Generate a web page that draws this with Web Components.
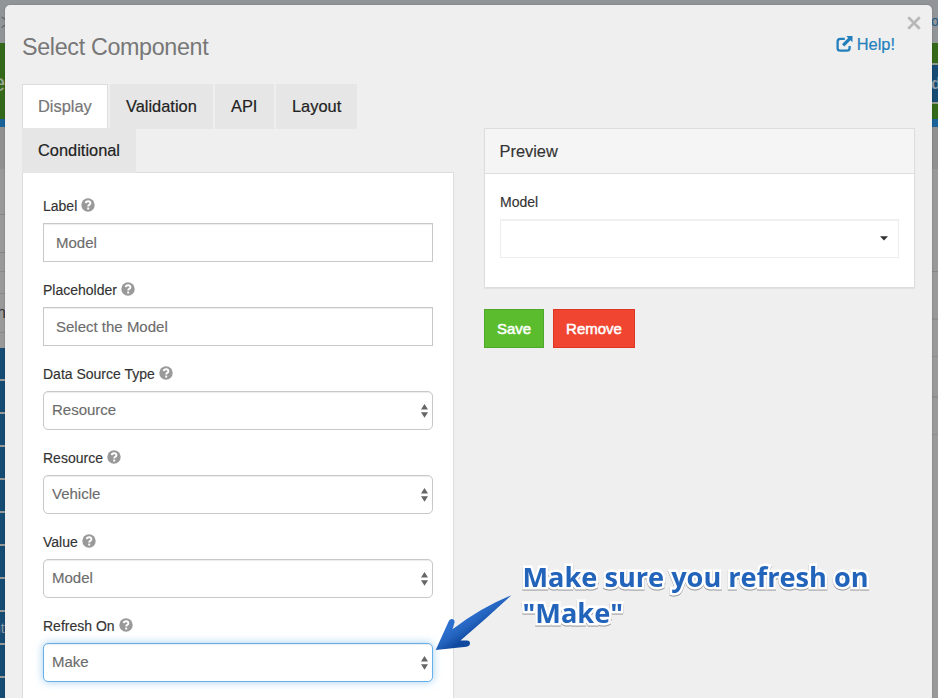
<!DOCTYPE html>
<html lang="en">
<head>
<meta charset="utf-8">
<title>Select Component</title>
<style>
html,body{margin:0;height:100%;overflow:hidden}
body{font-family:"Liberation Sans",Arial,sans-serif;color:#333;background:#999;position:relative}
</style>
</head>
<body>
<page-backdrop></page-backdrop>
<modal-dialog>
  <dialog-header slot="header" heading="Select Component"></dialog-header>
  <div slot="left">
    <tab-list>
      <tab-item active style="width:86px">Display</tab-item><tab-item style="width:103px">Validation</tab-item><tab-item style="width:59px">API</tab-item><tab-item style="width:81px">Layout</tab-item><tab-item style="width:114px">Conditional</tab-item>
    </tab-list>
    <form-panel>
      <form-field label="Label" value="Model"></form-field>
      <form-field label="Placeholder" value="Select the Model"></form-field>
      <form-field label="Data Source Type" value="Resource" type="select"></form-field>
      <form-field label="Resource" value="Vehicle" type="select"></form-field>
      <form-field label="Value" value="Model" type="select"></form-field>
      <form-field label="Refresh On" value="Make" type="select" focused></form-field>
    </form-panel>
  </div>
  <preview-panel slot="right" heading="Preview" label="Model"></preview-panel>
  <action-button slot="actions">Save</action-button>
  <action-button slot="actions" danger>Remove</action-button>
</modal-dialog>
<callout-note></callout-note>
<script>
const define = (name, render) => customElements.define(name, class extends HTMLElement {
  connectedCallback() {
    if (this.shadowRoot) return;
    this.attachShadow({mode: 'open'}).innerHTML = render(this);
  }
});

const seg = (h, c, text = '', style = '') => `<div style="height:${h}px;background:${c}">${text ? `<span style="${style}">${text}</span>` : ''}</div>`;
const line = (c = '#868686') => seg(1, c);

define('page-backdrop', () => {
  const g = '#999';
  let left = seg(43, '#919598', '<svg width="5" height="43" viewBox="0 0 5 43"><path d="M1.5 17l4 2.5M1.5 27.500l4-2.500" stroke="#62686c" stroke-width="1.300" fill="none"/></svg>', '')
    + seg(76, '#34691a', 'e', 'font-size:24px;line-height:79px;color:#9aa692;margin-left:-8px') + seg(8, '#1b6299') + seg(42, '#909090')
    + seg(45, g) + line() + seg(37, g) + line() + seg(18, g) + line('#8a8a8a') + seg(21, g) + line('#8a8a8a')
    + seg(38, g, 'n', 'font-size:16px;line-height:38px;color:#333;margin-left:-3px') + line('#8a8a8a') + seg(15, g);
  for (let i = 0; i < 11; i++) left += seg(31, '#164b74', i === 8 ? 'nt' : '', 'font-size:14px;line-height:32px;color:#8c9ba7;margin-left:-7px') + seg(2, '#999');
  const right = seg(43, '#919598', 'oc', 'font-size:14px;line-height:42px;color:#245e85;margin-left:-1px')
    + seg(20, '#34691a') + seg(2, '#919b8b') + seg(37, '#164b74', 'd', 'font-size:16px;font-weight:bold;line-height:38px;color:#8f9ca6;margin-left:-1px')
    + seg(2, '#919b8b') + seg(15, '#34691a') + seg(8, '#1b6299') + seg(42, '#909090') + seg(102, g) + line()
    + seg(46, g) + seg(2, '#8e8e8e') + seg(36, g) + line('#8d8d8d') + seg(39, g) + seg(2, '#8e8e8e') + seg(36, g) + line('#8e8e8e') + seg(263, g);
  return `<style>
    :host{position:absolute;inset:0;display:flex;justify-content:space-between;background:#919598;overflow:hidden}
    .l{width:5px}.r{width:6px}.l,.r{overflow:hidden;height:698px}
    .l>div,.r>div{overflow:hidden;white-space:nowrap}
    span{display:block}svg{display:block}
  </style><div class="l">${left}</div><div class="r">${right}</div>`;
});

define('modal-dialog', () => `<style>
  :host{position:absolute;left:5px;right:6px;top:5px;bottom:0;overflow:hidden;box-sizing:border-box;background:#efefef;border-radius:5px 5px 0 0;box-shadow:0 0 2px rgba(0,0,0,.25);padding:0 17px;display:block}
  .cols{display:grid;grid-template-columns:432px 431px;column-gap:30px}
  .right{padding-top:44px}
  .actions{display:flex;gap:9px;margin-top:21px}
</style>
<slot name="header"></slot>
<div class="cols"><slot name="left"></slot><div class="right"><slot name="right"></slot><div class="actions"><slot name="actions"></slot></div></div></div>`);

define('dialog-header', el => `<style>
  :host{display:flex;height:79px;justify-content:space-between}
  h1{margin:28px 0 0;font-weight:400;font-size:23.300px;letter-spacing:-.33px;line-height:28px;color:#777}
  .side{display:flex;flex-direction:column;align-items:flex-end;margin-right:-6px}
  .x{width:14px;height:14px;margin-top:11px}
  a{display:flex;align-items:center;gap:4px;color:#2380bd;font-size:16.400px;line-height:20px;margin:4px 26px 0 0;-webkit-text-stroke:.2px #2380bd}
  svg{display:block}
</style>
<h1>${el.getAttribute('heading')}</h1>
<div class="side">
  <svg class="x" viewBox="0 0 14 14"><path d="M1.300 1.300l11.400 11.400M12.700 1.300L1.300 12.700" stroke="#b8b8b8" stroke-width="2.700"/></svg>
  <a><svg width="17" height="17" viewBox="0 0 17 17"><path d="M8.800 2.900H4.300Q1.600 2.900 1.600 5.600V12Q1.600 14.700 4.300 14.700H10.900Q13.600 14.700 13.600 12V10" fill="none" stroke="currentColor" stroke-width="2.300"/><path d="M10.300 0H16.500V6.200L14.500 4.300L8.300 10.500L6 8.200L12.200 2Z" fill="currentColor"/></svg>Help!</a>
</div>`);

define('tab-list', () => `<style>:host{display:flex;flex-wrap:wrap;column-gap:2px;height:88px;align-content:flex-start}</style><slot></slot>`);

define('tab-item', () => `<style>
  :host{display:block;box-sizing:border-box;height:45px;margin-bottom:-1px;padding-left:16px;line-height:45px;font-size:16.400px;color:#222;background:#e6e6e6;white-space:nowrap;-webkit-text-stroke:.2px}
  :host([active]){height:44px;padding-left:15px;line-height:43px;color:#777;background:#fff;border:1px solid #ddd;border-bottom:0}
</style><slot></slot>`);

define('form-panel', () => `<style>
  :host{display:block;box-sizing:border-box;width:432px;height:526px;background:#fff;border:1px solid #ddd;border-bottom:0;padding:23px 20px 0}
</style><slot></slot>`);

const help = `<svg width="14" height="14" viewBox="0 0 14 14"><circle cx="7" cy="7" r="6.700" fill="#999"/><path d="M4.700 5.200Q4.900 3.200 7.100 3.200Q9.400 3.200 9.400 5.200Q9.400 6.300 8.200 6.900Q7.200 7.400 7.200 8.600" fill="none" stroke="#fff" stroke-width="1.900"/><path d="M6.200 9.600h2v1.900h-2z" fill="#fff"/></svg>`;

define('form-field', el => {
  const select = el.getAttribute('type') === 'select';
  return `<style>
  :host{display:block;height:84px}
  .label{display:flex;gap:4px;height:27px;font-size:14px;line-height:21px;color:#333;-webkit-text-stroke:.15px}
  .label svg{margin-top:2px}
  .box{display:flex;justify-content:space-between;align-items:center;box-sizing:border-box;height:39px;border:1px solid #c8c8c8;background:#fff;padding:0 4px 1px 12px;font-size:15px;color:#6c6c6c;box-shadow:inset 0 1px 1px rgba(0,0,0,.075);-webkit-text-stroke:.15px}
  .select{border-radius:5px;padding:0 4px 2px 8px}
  .select svg{margin-top:2px}
  :host([focused]) .box{border-color:#66afe9;box-shadow:inset 0 1px 1px rgba(0,0,0,.075),0 0 8px rgba(102,175,233,.6)}
  </style>
  <div class="label"><span>${el.getAttribute('label')}</span>${help}</div>
  <div class="box ${select ? 'select' : ''}"><span>${el.getAttribute('value')}</span>${select ? '<svg width="7" height="14" viewBox="0 0 7 14"><path d="M0 5.500L3.500 0L7 5.500zM0 8.200h7L3.500 13.700z" fill="#666"/></svg>' : ''}</div>`;
});

define('preview-panel', el => `<style>
  :host{display:block;box-sizing:border-box;height:160px;background:#fff;border:1px solid #ddd;box-shadow:0 1px 1px rgba(0,0,0,.05)}
  .head{height:44px;line-height:45px;padding-left:14.500px;font-size:16.400px;color:#333;background:#f5f5f5;border-bottom:1px solid #ddd;-webkit-text-stroke:.15px}
  .body{padding:18px 15px 0}
  .label{font-size:14px;line-height:21px;height:27px;-webkit-text-stroke:.15px}
  .box{display:flex;align-items:center;justify-content:flex-end;box-sizing:border-box;height:39px;border:1px solid #eee;box-shadow:inset 0 1px 1px rgba(0,0,0,.06);padding-right:10px}
</style>
<div class="head">${el.getAttribute('heading')}</div>
<div class="body"><div class="label">${el.getAttribute('label')}</div><div class="box"><svg width="8" height="5" viewBox="0 0 8 5"><path d="M0 .300h8L4 4.500z" fill="#333"/></svg></div></div>`);

define('action-button', () => `<style>
  :host{display:block;box-sizing:border-box;width:60px;height:39px;border:1px solid #4fa82b;background:#5bbd2e;color:#fff;text-align:center;font-size:15px;line-height:38px;-webkit-text-stroke:.5px #fff}
  :host([danger]){width:82px;background:#f04530;border-color:#df3525}
</style><slot></slot>`);

define('callout-note', () => `<style>
  :host{position:absolute;left:434px;top:559px;width:460px;height:100px;display:flex;align-items:flex-start}
  svg{display:block;margin-top:34px;flex:none}
  p{margin:0 0 0 8.500px;font:bold 27.150px/36px "Open Sans","Noto Sans",sans-serif;color:#2364bb;white-space:nowrap;-webkit-text-stroke:5px #fff;paint-order:stroke fill;filter:drop-shadow(0 1px .6px rgba(0,0,0,.38))}
</style>
<svg width="80" height="60" viewBox="434 593 80 60">
  <defs><linearGradient id="g" gradientUnits="userSpaceOnUse" x1="466" y1="617" x2="476" y2="632"><stop offset="0" stop-color="#2c6fce"/><stop offset=".5" stop-color="#2363bd"/><stop offset="1" stop-color="#1048a0"/></linearGradient></defs>
  <path d="M511.500 595.200Q482 607 452.500 629.200L454.500 622.500Q455 619 451.600 619Q449.400 619 448.600 621.500L435.700 650L466.500 646.700Q470 646.300 470 643.300Q470 640.500 467 640.400L460.500 640.600Q487 618 511.500 595.200Z" fill="url(#g)"/>
</svg>
<p>Make sure you refresh on<br>"Make"</p>`);
</script>
</body>
</html>
